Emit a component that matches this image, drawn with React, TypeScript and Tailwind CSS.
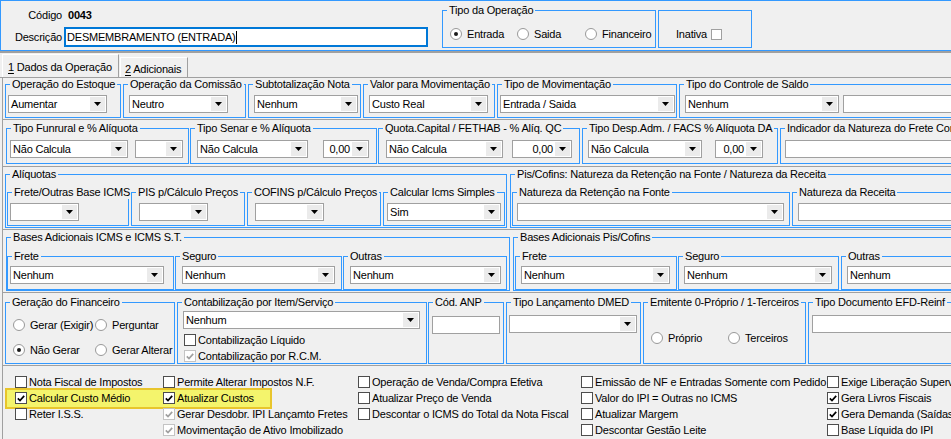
import React from 'react';

type Kids = { children?: React.ReactNode; className?: string };

function Group({ title, className = '', children }: Kids & { title?: string }) {
  return (
    <fieldset className={`shrink-0 min-w-0 border border-[#3399ff] ${className}`}>
      <legend className="ml-[4px] px-[2px] leading-[13px] whitespace-nowrap">{title}</legend>
      {children}
    </fieldset>
  );
}

function Arrow() {
  return (
    <span className="w-[15px] my-[1px] mr-[1px] bg-[#ebebeb] flex items-center justify-center shrink-0">
      <svg width="7" height="4" viewBox="0 0 7 4">
        <path d="M0 0h7L3.5 4z" fill="#000" />
      </svg>
    </span>
  );
}

function Select({ value = '', right = false, className = '' }: { value?: string; right?: boolean; className?: string }) {
  return (
    <div className={`flex shrink-0 h-[18px] bg-white border border-[#a0a0a0] ${className}`}>
      <span
        className={`flex-1 min-w-0 overflow-hidden whitespace-nowrap leading-[16px] px-[2px] ${right ? 'text-right' : ''}`}
      >
        {value}
      </span>
      <Arrow />
    </div>
  );
}

function Input({ className = '' }: { className?: string }) {
  return <div className={`shrink-0 h-[18px] bg-white border border-[#a0a0a0] ${className}`} />;
}

function Radio({ checked = false, label, className = '' }: { checked?: boolean; label: string; className?: string }) {
  return (
    <div className={`flex items-center h-[16px] shrink-0 ${className}`}>
      <span className="w-[12px] h-[12px] rounded-full border border-[#999999] bg-white flex items-center justify-center shrink-0">
        {checked && <span className="w-[4px] h-[4px] rounded-full bg-[#1a1a1a]" />}
      </span>
      <span className="ml-[5px] whitespace-nowrap">{label}</span>
    </div>
  );
}

function Check({
  checked = false,
  disabled = false,
  label,
  className = '',
}: {
  checked?: boolean;
  disabled?: boolean;
  label: string;
  className?: string;
}) {
  return (
    <div className={`flex items-center h-[16px] whitespace-nowrap ${className}`}>
      <span
        className={`w-[12px] h-[12px] shrink-0 bg-white border flex items-center justify-center ${
          disabled ? 'border-[#c4c4c4]' : 'border-[#4d4d4d]'
        }`}
      >
        {checked && (
          <svg width="8" height="7" viewBox="0 0 8 7">
            <path
              d="M0.8 3.4 L3 5.6 L7.2 0.9"
              fill="none"
              stroke={disabled ? '#a0a0a0' : '#000'}
              strokeWidth="1.7"
            />
          </svg>
        )}
      </span>
      <span className="ml-[2px]">{label}</span>
    </div>
  );
}

export default function App() {
  return (
    <div
      className="w-[951px] h-[439px] overflow-hidden bg-[#f0f0f0] text-[11px] tracking-[-0.2px] text-black"
      style={{ fontFamily: '"Liberation Sans", Arial, sans-serif' }}
    >
      <div className="w-[1100px]">
        {/* cabeçalho */}
        <div className="h-[51px] border border-[#3399ff] flex">
          <div className="w-[427px] pt-[4px] shrink-0">
            <div className="flex items-center h-[20px]">
              <span className="w-[61px] text-right">Código</span>
              <span className="ml-[6px] font-bold">0043</span>
            </div>
            <div className="flex items-center h-[20px] mt-[2px]">
              <span className="w-[61px] text-right">Descrição</span>
              <div className="ml-[2px] w-[364px] h-[20px] border-2 border-[#0078d7] bg-white flex items-center pl-[1px]">
                DESMEMBRAMENTO (ENTRADA)
                <span className="w-px h-[13px] bg-black" />
              </div>
            </div>
          </div>
          <Group title="Tipo da Operação" className="ml-[14px] mt-[3px] w-[214px] h-[44px]">
            <div className="flex mt-[9px] pl-[7px]">
              <Radio checked label="Entrada" className="w-[67px]" />
              <Radio label="Saida" className="w-[68px]" />
              <Radio label="Financeiro" />
            </div>
          </Group>
          <div className="ml-[2px] mt-[9px] w-[94px] h-[38px] border border-[#3399ff] shrink-0">
            <div className="flex items-center h-[16px] mt-[15px] pl-[17px]">
              <span>Inativa</span>
              <span className="ml-[4px] w-[11px] h-[11px] border border-[#a0a0a0] bg-white" />
            </div>
          </div>
        </div>
        <div className="h-[2px] bg-[#a0a0a0]" />

        {/* abas */}
        <div className="h-[25px] flex items-end border-b border-[#a0a0a0]">
          <div className="ml-[2px] w-[117px] h-[23px] border-l border-t border-white border-r border-r-[#a0a0a0] pl-[5px] pt-[4px] whitespace-nowrap">
            <u className="underline-offset-2">1</u> Dados da Operação
          </div>
          <div className="ml-[1px] w-[68px] h-[20px] border-l border-t border-white border-r border-r-[#a0a0a0] pl-[4px] pt-[3px] whitespace-nowrap">
            <u className="underline-offset-2">2</u> Adicionais
          </div>
        </div>

        <div className="ml-[2px] border-l border-[#a0a0a0]">
          {/* linha 1 */}
          <div className="h-[42px] border-b border-[#a0a0a0] flex pl-[2px]">
            <Group title="Operação do Estoque" className="w-[116px] h-[40px]">
              <Select value="Aumentar" className="mt-[4px] ml-[2px] w-[99px]" />
            </Group>
            <Group title="Operação da Comissão" className="ml-[2px] w-[123px] h-[40px]">
              <Select value="Neutro" className="mt-[4px] ml-[5px] w-[99px]" />
            </Group>
            <Group title="Subtotalização Nota" className="ml-[2px] w-[113px] h-[40px]">
              <Select value="Nenhum" className="mt-[4px] ml-[5px] w-[104px]" />
            </Group>
            <Group title="Valor para Movimentação" className="ml-[2px] w-[132px] h-[40px]">
              <Select value="Custo Real" className="mt-[4px] ml-[5px] w-[119px]" />
            </Group>
            <Group title="Tipo de Movimentação" className="ml-[2px] w-[180px] h-[40px]">
              <Select value="Entrada / Saida" className="mt-[4px] ml-[2px] w-[175px]" />
            </Group>
            <Group title="Tipo do Controle de Saldo" className="ml-[2px] w-[300px] h-[40px]">
              <div className="flex mt-[4px]">
                <Select value="Nenhum" className="ml-[5px] w-[154px]" />
                <Input className="ml-[4px] w-[200px]" />
              </div>
            </Group>
          </div>

          {/* linha 2 */}
          <div className="h-[47px] border-b border-[#a0a0a0] flex pl-[3px] pt-[2px]">
            <Group title="Tipo Funrural e % Alíquota" className="w-[183px] h-[42px]">
              <div className="flex mt-[5px]">
                <Select value="Não Calcula" className="ml-[3px] w-[118px]" />
                <Select className="ml-[7px] w-[48px]" />
              </div>
            </Group>
            <Group title="Tipo Senar e % Alíquota" className="ml-[1px] w-[187px] h-[42px]">
              <div className="flex mt-[5px]">
                <Select value="Não Calcula" className="ml-[6px] w-[111px]" />
                <Select value="0,00" right className="ml-[15px] w-[46px]" />
              </div>
            </Group>
            <Group title="Quota.Capital / FETHAB - % Alíq. QC" className="ml-[1px] w-[202px] h-[42px]">
              <div className="flex mt-[5px]">
                <Select value="Não Calcula" className="ml-[7px] w-[117px]" />
                <Select value="0,00" right className="ml-[9px] w-[60px]" />
              </div>
            </Group>
            <Group title="Tipo Desp.Adm. / FACS % Alíquota DA" className="ml-[2px] w-[196px] h-[42px]">
              <div className="flex mt-[5px]">
                <Select value="Não Calcula" className="ml-[5px] w-[114px]" />
                <Select value="0,00" right className="ml-[13px] w-[48px]" />
              </div>
            </Group>
            <Group title="Indicador da Natureza do Frete Contratado" className="ml-[2px] w-[300px] h-[42px]">
              <Input className="mt-[5px] ml-[4px] w-[250px]" />
            </Group>
          </div>

          {/* linha 3 */}
          <div className="h-[63px] border-b border-[#a0a0a0] flex pl-[2px] pt-[1px]">
            <Group title="Alíquotas" className="w-[502px] h-[60px]">
              <div className="flex mt-[5px]">
                <Group title="Frete/Outras Base ICMS" className="ml-[1px] w-[122px] h-[40px]">
                  <Select className="mt-[4px] ml-[2px] w-[69px]" />
                </Group>
                <Group title="PIS p/Cálculo Preços" className="ml-[2px] w-[114px] h-[40px]">
                  <Select className="mt-[4px] ml-[7px] w-[69px]" />
                </Group>
                <Group title="COFINS p/Cálculo Preços" className="ml-[2px] w-[134px] h-[40px]">
                  <Select className="mt-[4px] ml-[7px] w-[69px]" />
                </Group>
                <Group title="Calcular Icms Simples" className="ml-[2px] w-[122px] h-[40px]">
                  <Select value="Sim" className="mt-[4px] ml-[3px] w-[114px]" />
                </Group>
              </div>
            </Group>
            <Group
              title="Pis/Cofins: Natureza da Retenção na Fonte / Natureza da Receita"
              className="ml-[3px] w-[450px] h-[60px]"
            >
              <div className="flex mt-[5px]">
                <Group title="Natureza da Retenção na Fonte" className="ml-[1px] w-[278px] h-[40px]">
                  <Select className="mt-[4px] ml-[4px] w-[267px]" />
                </Group>
                <Group title="Natureza da Receita" className="ml-[2px] w-[200px] h-[40px]">
                  <Input className="mt-[4px] ml-[5px] w-[190px]" />
                </Group>
              </div>
            </Group>
          </div>

          {/* linha 4 */}
          <div className="h-[63px] border-b border-[#a0a0a0] flex pl-[3px] pt-[1px]">
            <Group title="Bases Adicionais ICMS e ICMS S.T." className="w-[504px] h-[60px]">
              <div className="flex mt-[6px]">
                <Group title="Frete" className="w-[167px] h-[40px]">
                  <Select value="Nenhum" className="mt-[3px] ml-[2px] w-[154px]" />
                </Group>
                <Group title="Seguro" className="ml-[1px] w-[167px] h-[40px]">
                  <Select value="Nenhum" className="mt-[3px] ml-[6px] w-[153px]" />
                </Group>
                <Group title="Outras" className="ml-[1px] w-[164px] h-[40px]">
                  <Select value="Nenhum" className="mt-[3px] ml-[6px] w-[151px]" />
                </Group>
              </div>
            </Group>
            <Group title="Bases Adicionais Pis/Cofins" className="ml-[3px] w-[440px] h-[60px]">
              <div className="flex mt-[6px]">
                <Group title="Frete" className="ml-[1px] w-[162px] h-[40px]">
                  <Select value="Nenhum" className="mt-[3px] ml-[5px] w-[149px]" />
                </Group>
                <Group title="Seguro" className="ml-[1px] w-[161px] h-[40px]">
                  <Select value="Nenhum" className="mt-[3px] ml-[5px] w-[148px]" />
                </Group>
                <Group title="Outras" className="ml-[2px] w-[150px] h-[40px]">
                  <Select value="Nenhum" className="mt-[3px] ml-[5px] w-[130px]" />
                </Group>
              </div>
            </Group>
          </div>

          {/* linha 5 */}
          <div className="h-[73px] border-b border-[#a0a0a0] flex pl-[2px] pt-[3px]">
            <Group title="Geração do Financeiro" className="w-[170px] h-[68px]">
              <div className="pl-[7px]">
                <div className="flex mt-[8px]">
                  <Radio label="Gerar (Exigir)" className="w-[82px]" />
                  <Radio label="Perguntar" />
                </div>
                <div className="flex mt-[9px]">
                  <Radio checked label="Não Gerar" className="w-[82px]" />
                  <Radio label="Gerar Alterar" />
                </div>
              </div>
            </Group>
            <Group title="Contabilização por Item/Serviço" className="ml-[2px] w-[250px] h-[68px]">
              <Select value="Nenhum" className="mt-[2px] ml-[5px] w-[237px]" />
              <div className="ml-[6px] mt-[3px]">
                <Check label="Contabilização Líquido" className="h-[15px]" />
                <Check checked disabled label="Contabilização por R.C.M." className="h-[15px]" />
              </div>
            </Group>
            <Group title="Cód. ANP" className="ml-[1px] w-[76px] h-[68px]">
              <Input className="mt-[7px] ml-[3px] w-[68px]" />
            </Group>
            <Group title="Tipo Lançamento DMED" className="ml-[2px] w-[135px] h-[68px]">
              <Select className="mt-[6px] ml-[2px] w-[128px]" />
            </Group>
            <Group title="Emitente 0-Próprio / 1-Terceiros" className="ml-[2px] w-[163px] h-[68px]">
              <div className="flex mt-[21px] ml-[7px]">
                <Radio label="Próprio" className="w-[77px]" />
                <Radio label="Terceiros" />
              </div>
            </Group>
            <Group title="Tipo Documento EFD-Reinf" className="ml-[2px] w-[200px] h-[68px]">
              <Input className="mt-[6px] ml-[3px] w-[190px]" />
            </Group>
          </div>

          {/* linha 6 */}
          <div className="relative h-[80px] flex pl-[12px] pt-[8px]">
            <div className="absolute left-[2px] top-[22px] w-[267px] h-[21px] bg-[#f4f46c] border-2 border-[#e8c52c]" />
            <div className="relative w-[148px] shrink-0">
              <Check label="Nota Fiscal de Impostos" />
              <Check checked label="Calcular Custo Médio" />
              <Check label="Reter I.S.S." />
            </div>
            <div className="relative w-[195px] shrink-0">
              <Check label="Permite Alterar Impostos N.F." />
              <Check checked label="Atualizar Custos" />
              <Check checked disabled label="Gerar Desdobr. IPI Lançamto Fretes" />
              <Check checked disabled label="Movimentação de Ativo Imobilizado" />
            </div>
            <div className="w-[223px] shrink-0">
              <Check label="Operação de Venda/Compra Efetiva" />
              <Check label="Atualizar Preço de Venda" />
              <Check label="Descontar o ICMS do Total da Nota Fiscal" />
            </div>
            <div className="w-[246px] shrink-0">
              <Check label="Emissão de NF e Entradas Somente com Pedido" />
              <Check label="Valor do IPI = Outras no ICMS" />
              <Check label="Atualizar Margem" />
              <Check label="Descontar Gestão Leite" />
            </div>
            <div className="shrink-0">
              <Check label="Exige Liberação Supervisor" />
              <Check checked label="Gera Livros Fiscais" />
              <Check checked label="Gera Demanda (Saídas)" />
              <Check label="Base Líquida do IPI" />
            </div>
          </div>
        </div>
      </div>
    </div>
  );
}
